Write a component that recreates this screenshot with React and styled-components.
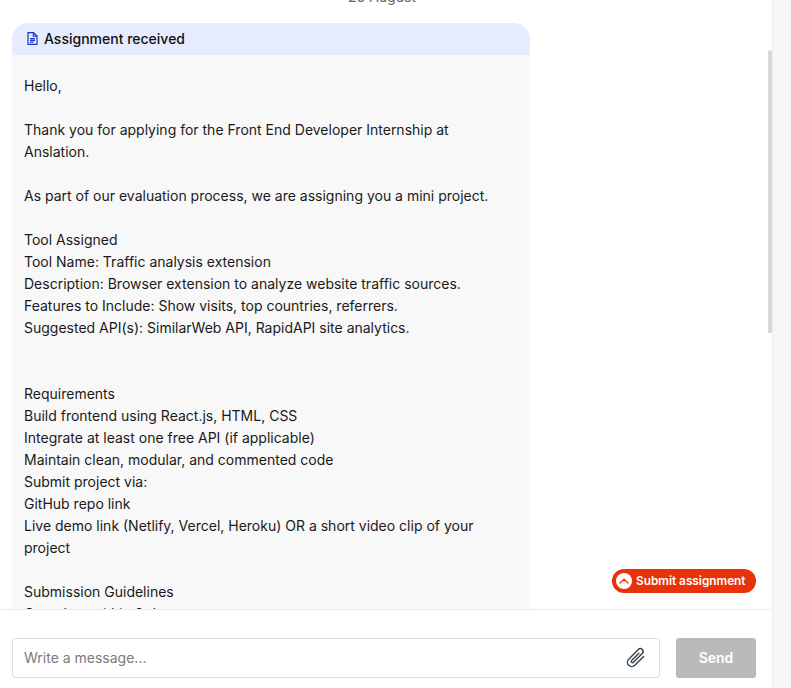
import React from "react";
import styled, { createGlobalStyle } from "styled-components";

const GlobalStyle = createGlobalStyle`
  html, body {
    margin: 0;
    padding: 0;
    height: 100%;
    overflow: hidden;
    background: #ffffff;
  }
  * {
    box-sizing: border-box;
  }
`;

const Page = styled.div`
  display: flex;
  height: 688px;
  width: 791px;
  font-family: "Inter", sans-serif;
  color: #1a1a1a;
`;

const Chat = styled.main`
  position: relative;
  width: 773px;
  display: flex;
  flex-direction: column;
  border-right: 1px solid #ebebeb;
  background: #ffffff;
`;

const Side = styled.aside`
  flex: 1;
  background: #f7f7f7;
`;

const Messages = styled.section`
  height: 609px;
  overflow: hidden;
  padding: 0 12px;
`;

const DateLabel = styled.div`
  margin: -12px 0 17px 336px;
  height: 18px;
  line-height: 18px;
  font-size: 14px;
  color: #666666;
  white-space: nowrap;
`;

const Card = styled.article`
  width: 518px;
`;

const CardHeader = styled.header`
  height: 32px;
  display: flex;
  align-items: center;
  gap: 6px;
  padding: 0 0 2px 15px;
  background: #e6ebfe;
  border-radius: 16px 16px 0 0;
  font-size: 14px;
  font-weight: 500;
  color: #111111;
`;

const CardBody = styled.div`
  background: #f8f8f8;
  padding: 20px 16px 20px 12px;
  font-size: 14px;
  line-height: 22px;
  color: #1a1a1a;
`;

const Line = styled.div`
  min-height: 22px;
`;

const Scrollbar = styled.div`
  position: absolute;
  top: 50px;
  right: 0;
  width: 4px;
  height: 283px;
  border-radius: 3px 3px 0 0;
  background: #d9d9d9;
`;

const SubmitPill = styled.button`
  position: absolute;
  left: 612px;
  top: 569px;
  height: 24px;
  width: 144px;
  padding: 0 0 1px 4px;
  display: flex;
  align-items: center;
  gap: 4px;
  border: none;
  border-radius: 12px;
  background: #e8320a;
  color: #ffffff;
  font-family: inherit;
  font-size: 11.8px;
  font-weight: 600;
  white-space: nowrap;
`;

const PillIcon = styled.span`
  width: 16px;
  height: 16px;
  margin-top: 1px;
  border-radius: 50%;
  background: #ffffff;
  display: flex;
  align-items: center;
  justify-content: center;
`;

const Composer = styled.footer`
  height: 79px;
  border-top: 1px solid #ebebeb;
  padding: 28px 16px 0 12px;
  display: flex;
  gap: 16px;
  align-items: flex-start;
`;

const InputBox = styled.div`
  width: 648px;
  height: 40px;
  border: 1px solid #dcdcdc;
  border-radius: 3px;
  display: flex;
  align-items: center;
  justify-content: space-between;
  padding: 0 10px 2px 11px;
  font-size: 14px;
  color: #7a7a7a;
`;

const ClipSvg = styled.svg`
  width: 26px;
  height: 26px;
  margin-top: 2px;
`;

const SendButton = styled.button`
  width: 80px;
  height: 40px;
  border: none;
  border-radius: 3px;
  padding: 0 0 2px;
  background: #bababa;
  color: #ffffff;
  font-family: inherit;
  font-size: 14px;
  font-weight: 600;
`;

const lines = [
  "Hello,",
  "",
  "Thank you for applying for the Front End Developer Internship at Anslation.",
  "",
  "As part of our evaluation process, we are assigning you a mini project.",
  "",
  "Tool Assigned",
  "Tool Name: Traffic analysis extension",
  "Description: Browser extension to analyze website traffic sources.",
  "Features to Include: Show visits, top countries, referrers.",
  "Suggested API(s): SimilarWeb API, RapidAPI site analytics.",
  "",
  "",
  "Requirements",
  "Build frontend using React.js, HTML, CSS",
  "Integrate at least one free API (if applicable)",
  "Maintain clean, modular, and commented code",
  "Submit project via:",
  "GitHub repo link",
  "Live demo link (Netlify, Vercel, Heroku) OR a short video clip of your project",
  "",
  "Submission Guidelines",
  "Complete within 3 days",
];

const DocIcon = () => (
  <svg width="11" height="13" viewBox="0 0 11 13" fill="none" stroke="#1a34c8" strokeWidth="1.2">
    <path d="M1 .7h5.6L10 4v8.3H1z" />
    <path d="M6.4.7v3.5H10" />
    <path d="M3 6.6h5M3 8.4h5M3 10.2h3.4" />
  </svg>
);

const ClipIcon = () => (
  <ClipSvg viewBox="0 0 24 24" fill="none" stroke="#36424e" strokeWidth="1.3" strokeLinecap="round" strokeLinejoin="round">
    <path
      d="M16 6v11.5a4 4 0 0 1-8 0V5a2.6 2.6 0 0 1 5.2 0v11.5a1.2 1.2 0 0 1-2.4 0V7"
      transform="rotate(45 12 12)"
    />
  </ClipSvg>
);

const App = () => {
  return (
    <Page>
      <GlobalStyle />
      <Chat>
        <Messages>
          <DateLabel>26 August</DateLabel>
          <Card>
            <CardHeader>
              <DocIcon />
              Assignment received
            </CardHeader>
            <CardBody>
              {lines.map((line, i) => (
                <Line key={i}>{line}</Line>
              ))}
            </CardBody>
          </Card>
        </Messages>
        <Scrollbar />
        <SubmitPill>
          <PillIcon>
            <svg width="10" height="6" viewBox="0 0 10 6" fill="none" stroke="#e8320a" strokeWidth="1.4" strokeLinecap="round" strokeLinejoin="round">
              <path d="M1 5 5 1.2 9 5" />
            </svg>
          </PillIcon>
          Submit assignment
        </SubmitPill>
        <Composer>
          <InputBox>
            Write a message...
            <ClipIcon />
          </InputBox>
          <SendButton>Send</SendButton>
        </Composer>
      </Chat>
      <Side />
    </Page>
  );
};

export default App;
